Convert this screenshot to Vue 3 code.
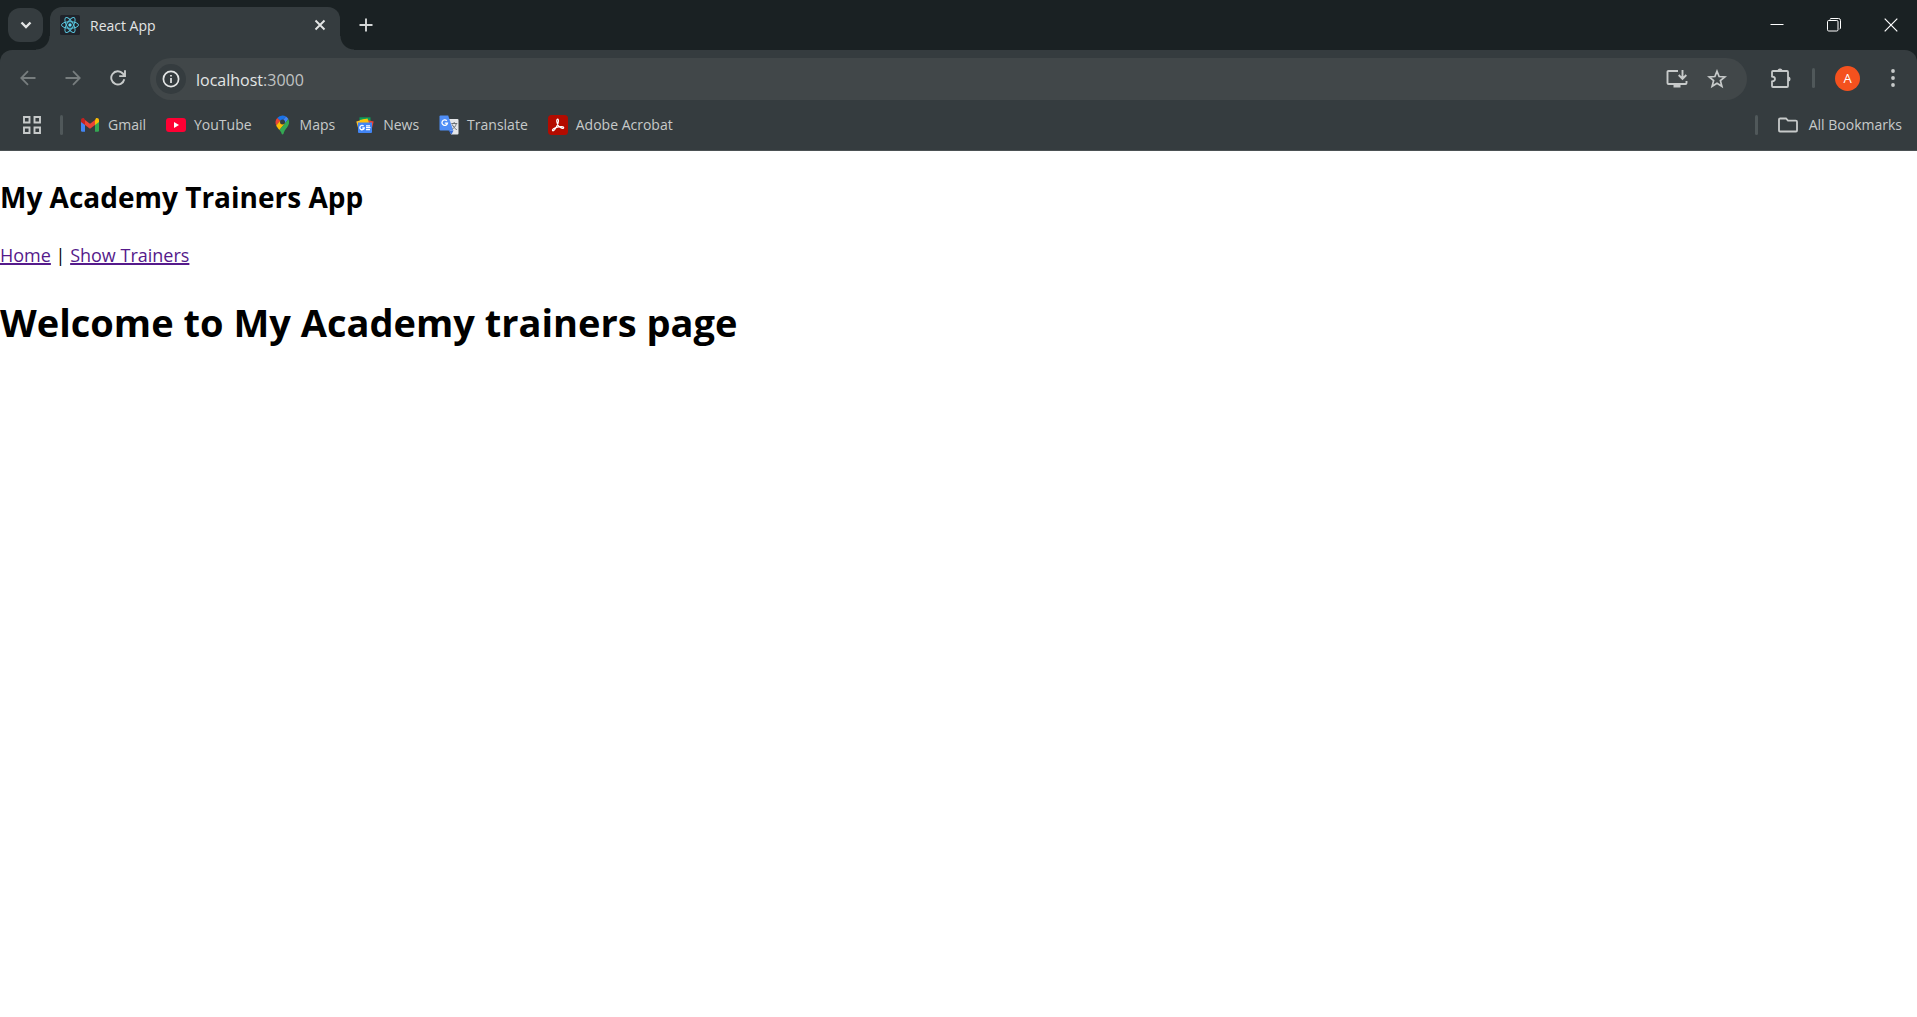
<script setup>
const bookmarks = [
  { id: 'gmail', label: 'Gmail' },
  { id: 'youtube', label: 'YouTube' },
  { id: 'maps', label: 'Maps' },
  { id: 'news', label: 'News' },
  { id: 'translate', label: 'Translate' },
  { id: 'acrobat', label: 'Adobe Acrobat' },
]
</script>

<template>
  <div class="browser">
    <header class="chrome">
      <div class="tabstrip">
        <button class="tab-search" aria-label="Search tabs">
          <svg width="12" height="8" viewBox="0 0 12 8"><path d="M1.5 1.5 6 6l4.500-4.500" fill="none" stroke="#e3e5e5" stroke-width="2.400" /></svg>
        </button>
        <div class="tab">
          <svg class="icon" width="20" height="20" viewBox="0 0 20 20">
            <rect width="20" height="20" rx="1.500" fill="#20232a" />
            <g fill="none" stroke="#58c4dc" stroke-width="1">
              <ellipse cx="10" cy="10" rx="8.500" ry="3.300" />
              <ellipse cx="10" cy="10" rx="8.500" ry="3.300" transform="rotate(60 10 10)" />
              <ellipse cx="10" cy="10" rx="8.500" ry="3.300" transform="rotate(120 10 10)" />
            </g>
            <circle cx="10" cy="10" r="1.700" fill="#61dafb" />
          </svg>
          <span class="tab-title">React App</span>
          <button class="bare tab-close" aria-label="Close tab">
            <svg width="12" height="12" viewBox="0 0 12 12"><path d="m1.500 1.500 9 9m0-9-9 9" stroke="#e3e5e5" stroke-width="1.900" /></svg>
          </button>
        </div>
        <button class="bare new-tab" aria-label="New tab">
          <svg width="14" height="14" viewBox="0 0 14 14"><path d="M7 .5v13M.5 7h13" stroke="#d4d7d7" stroke-width="1.900" /></svg>
        </button>
        <div class="window-controls">
          <button class="bare" aria-label="Minimize">
            <svg width="14" height="14" viewBox="0 0 14 14"><path d="M.5 6.500h13" stroke="#fff" /></svg>
          </button>
          <button class="bare" aria-label="Restore">
            <svg width="14" height="14" viewBox="0 0 14 14" fill="none" stroke="#fff"><path d="M3 1.500V1q.5-.5 1-.5h7.500q2 0 2 2V10q0 .8-.8 1" /><rect x=".5" y="2.500" width="10.500" height="10.500" rx="1.200" /></svg>
          </button>
          <button class="bare" aria-label="Close window">
            <svg width="14" height="14" viewBox="0 0 14 14"><path d="m.7.7 12.600 12.600m0-12.600L.7 13.300" stroke="#fff" stroke-width="1.200" /></svg>
          </button>
        </div>
      </div>

      <div class="panel">
        <div class="toolbar">
          <div class="nav-buttons">
            <button class="bare" aria-label="Back">
              <svg width="16" height="16" viewBox="0 0 16 16"><path d="M15.500 8H1.500M8 1.200 1.300 8 8 14.800" fill="none" stroke="#777d7e" stroke-width="1.800" /></svg>
            </button>
            <button class="bare" aria-label="Forward">
              <svg width="16" height="16" viewBox="0 0 16 16"><path d="M.5 8h14M8 1.200 14.700 8 8 14.800" fill="none" stroke="#777d7e" stroke-width="1.800" /></svg>
            </button>
            <button class="bare" aria-label="Reload">
              <svg width="16" height="16" viewBox="0 0 16 16"><path d="M14.300 9.300A6.600 6.600 0 1 1 12.800 3.500L14.500 5.500M15 .3v5.800H9.200" fill="none" stroke="#c7caca" stroke-width="1.900" /></svg>
            </button>
          </div>
          <div class="omnibox">
            <button class="site-info" aria-label="View site information">
              <svg width="18" height="18" viewBox="0 0 18 18"><circle cx="9" cy="9" r="7.600" fill="none" stroke="#e3e5e5" stroke-width="1.700" /><path d="M9 8v5M9 4.900v1.700" stroke="#e3e5e5" stroke-width="1.700" /></svg>
            </button>
            <div class="address">localhost<span class="port">:3000</span></div>
            <button class="bare" aria-label="Install app">
              <svg width="22" height="20" viewBox="0 0 22 20" fill="none" stroke="#c7caca" stroke-width="1.900"><path d="M12 2H2.500Q1.500 2 1.500 3v11q0 1 1 1h17q1 0 1-1v-2M16.500 1v8.500M12.700 6l3.800 3.800L20.300 6" /><path d="M7.500 15h7v3.500h-7z" fill="#c7caca" stroke="none" /></svg>
            </button>
            <button class="bare" aria-label="Bookmark this tab">
              <svg width="20" height="20" viewBox="0 0 20 20"><path d="m10 2.200 2.100 5.300 5.800.4-4.500 3.700 1.500 5.700-4.900-3.100-4.900 3.100 1.500-5.700-4.500-3.700 5.800-.4z" fill="none" stroke="#c7caca" stroke-width="1.700" /></svg>
            </button>
          </div>
          <div class="actions">
            <button class="bare extensions" aria-label="Extensions">
              <svg width="22" height="22" viewBox="0 0 22 22"><path d="M3 4h14q1 0 1 1v14q0 1-1 1H3q-1 0-1-1v-4.500q3-.4 3-2.500T2 9.500V5q0-1 1-1z" fill="none" stroke="#c7caca" stroke-width="1.800" /><path d="M7.500 4a2.500 2.500 0 0 1 5 0zM18 9.500a2.500 2.500 0 0 1 0 5z" fill="#c7caca" /></svg>
            </button>
            <span class="divider slim"></span>
            <button class="avatar" aria-label="Profile">A</button>
            <button class="bare menu" aria-label="Menu">
              <svg width="4" height="18" viewBox="0 0 4 18" fill="#c7caca"><circle cx="2" cy="2" r="1.900" /><circle cx="2" cy="9" r="1.900" /><circle cx="2" cy="16" r="1.900" /></svg>
            </button>
          </div>
        </div>

        <nav class="bookmarks" aria-label="Bookmarks">
          <button class="bare" aria-label="Apps">
            <svg width="18" height="18" viewBox="0 0 18 18" fill="none" stroke="#c7caca" stroke-width="1.900"><path d="M1 1h5.500v5.500H1zM11.500 1H17v5.500h-5.500zM1 11.500h5.500V17H1zM11.500 11.500H17V17h-5.500z" /></svg>
          </button>
          <span class="divider"></span>
          <a v-for="b in bookmarks" :key="b.id" class="bookmark" href="#">
            <svg v-if="b.id === 'gmail'" class="icon" width="20" height="20" viewBox="0 0 20 20">
              <path d="M1 6v9.500q0 1.200 1.200 1.200H5V9z" fill="#4285f4" />
              <path d="M19 6v9.500q0 1.200-1.200 1.200H15V9z" fill="#34a853" />
              <path d="M15 5.200V10l4-3V5.200c0-2-2-2.700-3.200-1.800z" fill="#fbbc04" />
              <path d="M5 10V5l5 3.700L15 5v5l-5 3.800z" fill="#ea4335" />
              <path d="M1 5.200V7l4 3V5l-.8-1.600C3 2.500 1 3.300 1 5.200z" fill="#c5221f" />
            </svg>
            <svg v-else-if="b.id === 'youtube'" class="icon" width="20" height="20" viewBox="0 0 20 20">
              <rect y="3" width="20" height="14" rx="3" fill="#ff0033" /><path d="m8 7 5 3-5 3z" fill="#fff" />
            </svg>
            <svg v-else-if="b.id === 'maps'" class="icon" width="20" height="20" viewBox="0 0 20 20">
              <path d="M10.500.5A6.800 6.800 0 0 0 5.200 3l4 3.400L14 1.400A7 7 0 0 0 10.500.5z" fill="#1a73e8" />
              <path d="M14 1.400 8.500 7.800l4.500.6 3.400-4.300A7 7 0 0 0 14 1.400z" fill="#4285f4" />
              <path d="M5.200 3a7 7 0 0 0-1 7.400L8.500 6z" fill="#ea4335" />
              <path d="M8.300 5.800 4.200 10.600c.7 1.700 2 3 3.200 4.500L13 8.500z" fill="#fbbc04" />
              <path d="M16.400 4.100c1.400 3 .7 5.800-1.200 8.100-2 2.400-3.200 4.300-3.700 6.600-.3.900-1.600.9-1.900 0-.4-1.600-1.200-2.700-2.200-3.700z" fill="#34a853" />
              <circle cx="10.500" cy="7" r="2.500" fill="#353c3f" />
            </svg>
            <svg v-else-if="b.id === 'news'" class="icon" width="20" height="20" viewBox="0 0 20 20">
              <path d="M4.500 2.300h11V8h-11z" fill="#0c9d58" />
              <path d="m1.300 6.500 9-2.500 3 7-9.800 3.500z" fill="#fbc02d" />
              <path d="m10 4.500 8.700 2-2 8-7-2z" fill="#ea4335" />
              <path d="m5 5 7.500-1.500L14 8 5 9z" fill="#ffc107" />
              <path d="M3 7.500h14V17q0 1-1 1H4q-1 0-1-1z" fill="#4285f4" />
              <path d="M8.600 11a2.200 2.200 0 1 0 .6 2H7.300" fill="none" stroke="#fff" stroke-width="1.300" />
              <path d="M11 10.800h4M11 12.700h4.500M11 14.600h4" stroke="#fff" stroke-width="1.200" />
            </svg>
            <svg v-else-if="b.id === 'translate'" class="icon" width="20" height="20" viewBox="0 0 20 20">
              <path d="M7 4h11.500q1 0 1 1v13.500q0 1-1 1H12z" fill="#e4e6e9" />
              <path d="M9.500 15.500h5L12.500 19.500z" fill="#3367d6" />
              <path d="M1.500.5h7.700l5 15H1.500q-1 0-1-1v-13q0-1 1-1z" fill="#4f8df6" />
              <path d="M7.800 5.700a2.800 2.800 0 1 0 .7 2.500H5.800" fill="none" stroke="#fff" stroke-width="1.300" />
              <path d="M12.300 8.500h6M15.200 7v1.500M17.300 8.500c-.5 3-2.500 4.500-4 5.500M13.300 9.500c.7 2 2.500 4 4.500 5.200" fill="none" stroke="#6b7176" stroke-width="1" />
            </svg>
            <svg v-else class="icon" width="20" height="20" viewBox="0 0 20 20">
              <rect width="20" height="20" rx="3.500" fill="#b30b00" />
              <path d="M9.600 4.200c1.500 0 .8 3.800-.5 6.300-1.300 2.700-3 5.500-4.200 5.300-1.600-.7 1.500-3.300 5.600-4 2.500-.5 5.200-.3 5.200.8 0 1.700-3.600.3-5.200-1.700C9 9 7.900 4.500 9.600 4.200z" fill="none" stroke="#fff" stroke-width="1.200" />
            </svg>
            <span>{{ b.label }}</span>
          </a>
          <span class="divider all-divider"></span>
          <button class="bare all" type="button">
            <svg width="20" height="16" viewBox="0 0 20 16"><path d="M2.200 1.500H8l2 2.200h7.800q1.200 0 1.200 1v8.800q0 1-1 1H2q-1 0-1-1v-11q0-1 1.200-1z" fill="none" stroke="#c7caca" stroke-width="1.800" /></svg>
            <span>All Bookmarks</span>
          </button>
        </nav>
      </div>
    </header>

    <main class="page">
      <h2>My Academy Trainers App</h2>
      <div class="links"><a href="#">Home</a> | <a href="#">Show Trainers</a></div>
      <h1>Welcome to My Academy trainers page</h1>
    </main>
  </div>
</template>

<style>
body {
  margin: 0;
  background: #fff;
}
</style>

<style scoped>
.browser {
  font-family: "Segoe UI", "Open Sans", "Noto Sans", sans-serif;
}
.chrome {
  background: #1a2123;
  color: #c7caca;
  font-size: 14px;
  line-height: 20px;
}
button {
  display: flex;
  align-items: center;
  justify-content: center;
  flex: none;
  padding: 0;
  border: 0;
  color: inherit;
  font: inherit;
}
.bare {
  background: none;
}
svg {
  display: block;
  flex: none;
}
.tabstrip {
  display: flex;
  align-items: center;
  height: 50px;
  padding-left: 8px;
}
.tab-search {
  width: 35px;
  height: 34px;
  border-radius: 12px;
  background: #353c3f;
}
.tab {
  position: relative;
  display: flex;
  align-items: center;
  align-self: flex-end;
  box-sizing: border-box;
  width: 290px;
  height: 43px;
  margin-left: 7px;
  padding: 0 14px 7px 10px;
  border-radius: 12px 12px 0 0;
  background: #353c3f;
}
.tab::before,
.tab::after {
  position: absolute;
  bottom: 0;
  width: 14px;
  height: 14px;
  content: "";
}
.tab::before {
  right: 100%;
  background: radial-gradient(circle at 0 0, transparent 13px, #353c3f 14px);
}
.tab::after {
  left: 100%;
  background: radial-gradient(circle at 100% 0, transparent 13px, #353c3f 14px);
}
.tab-title {
  flex: 1;
  margin-left: 10px;
  padding-top: 2px;
  color: #e3e5e5;
}
.new-tab {
  margin-left: 19px;
}
.window-controls {
  display: flex;
  gap: 43px;
  margin-left: auto;
  padding-right: 19px;
}
.panel {
  padding-top: 8px;
  border-bottom: 1px solid #4b5153;
  border-radius: 12px 12px 0 0;
  background: #353c3f;
}
.toolbar {
  display: flex;
  align-items: center;
  height: 42px;
}
.nav-buttons {
  display: flex;
  gap: 29px;
  padding: 0 24px 2px 20px;
}
.omnibox {
  display: flex;
  align-items: center;
  flex: 1;
  gap: 19px;
  height: 42px;
  box-sizing: border-box;
  padding: 0 20px 0 6px;
  border-radius: 21px;
  background: #414749;
}
.site-info {
  width: 30px;
  height: 30px;
  border-radius: 50%;
  background: #353c3f;
}
.address {
  flex: 1;
  margin-left: -9px;
  padding-top: 2px;
  color: #e3e5e5;
  font-size: 16px;
}
.port {
  color: #c0c3c3;
}
.actions {
  display: flex;
  align-items: center;
  padding: 0 22px 2px 23px;
}
.divider {
  flex: none;
  width: 3px;
  height: 20px;
  border-radius: 2px;
  background: #50585a;
}
.slim {
  margin: 0 20px;
}
.avatar {
  width: 25px;
  height: 25px;
  border-radius: 50%;
  background: #f4511e;
  color: #fff;
  font-size: 13px;
}
.menu {
  margin-left: 31px;
}
.bookmarks {
  display: flex;
  align-items: center;
  height: 50px;
  padding: 0 15px 0 23px;
}
.bookmarks .divider {
  margin-left: 19px;
}
.bookmark {
  display: flex;
  align-items: center;
  gap: 8px;
  margin-left: 20px;
  color: inherit;
  text-decoration: none;
}
.divider + .bookmark {
  margin-left: 17px;
}
.bookmarks .all-divider {
  margin-left: auto;
}
.all {
  gap: 11px;
  margin-left: 20px;
}
.page {
  color: #000;
  font-size: 18px;
  line-height: 27px;
}
h1,
h2 {
  margin: 0;
}
h2 {
  padding-top: 26px;
  font-size: 28px;
  line-height: 40px;
}
.links {
  margin-top: 25px;
}
.links a {
  color: #551a8b;
  text-decoration-thickness: 2px;
  text-decoration-skip-ink: none;
}
h1 {
  margin-top: 27px;
  font-size: 38px;
  line-height: 53px;
}
</style>
